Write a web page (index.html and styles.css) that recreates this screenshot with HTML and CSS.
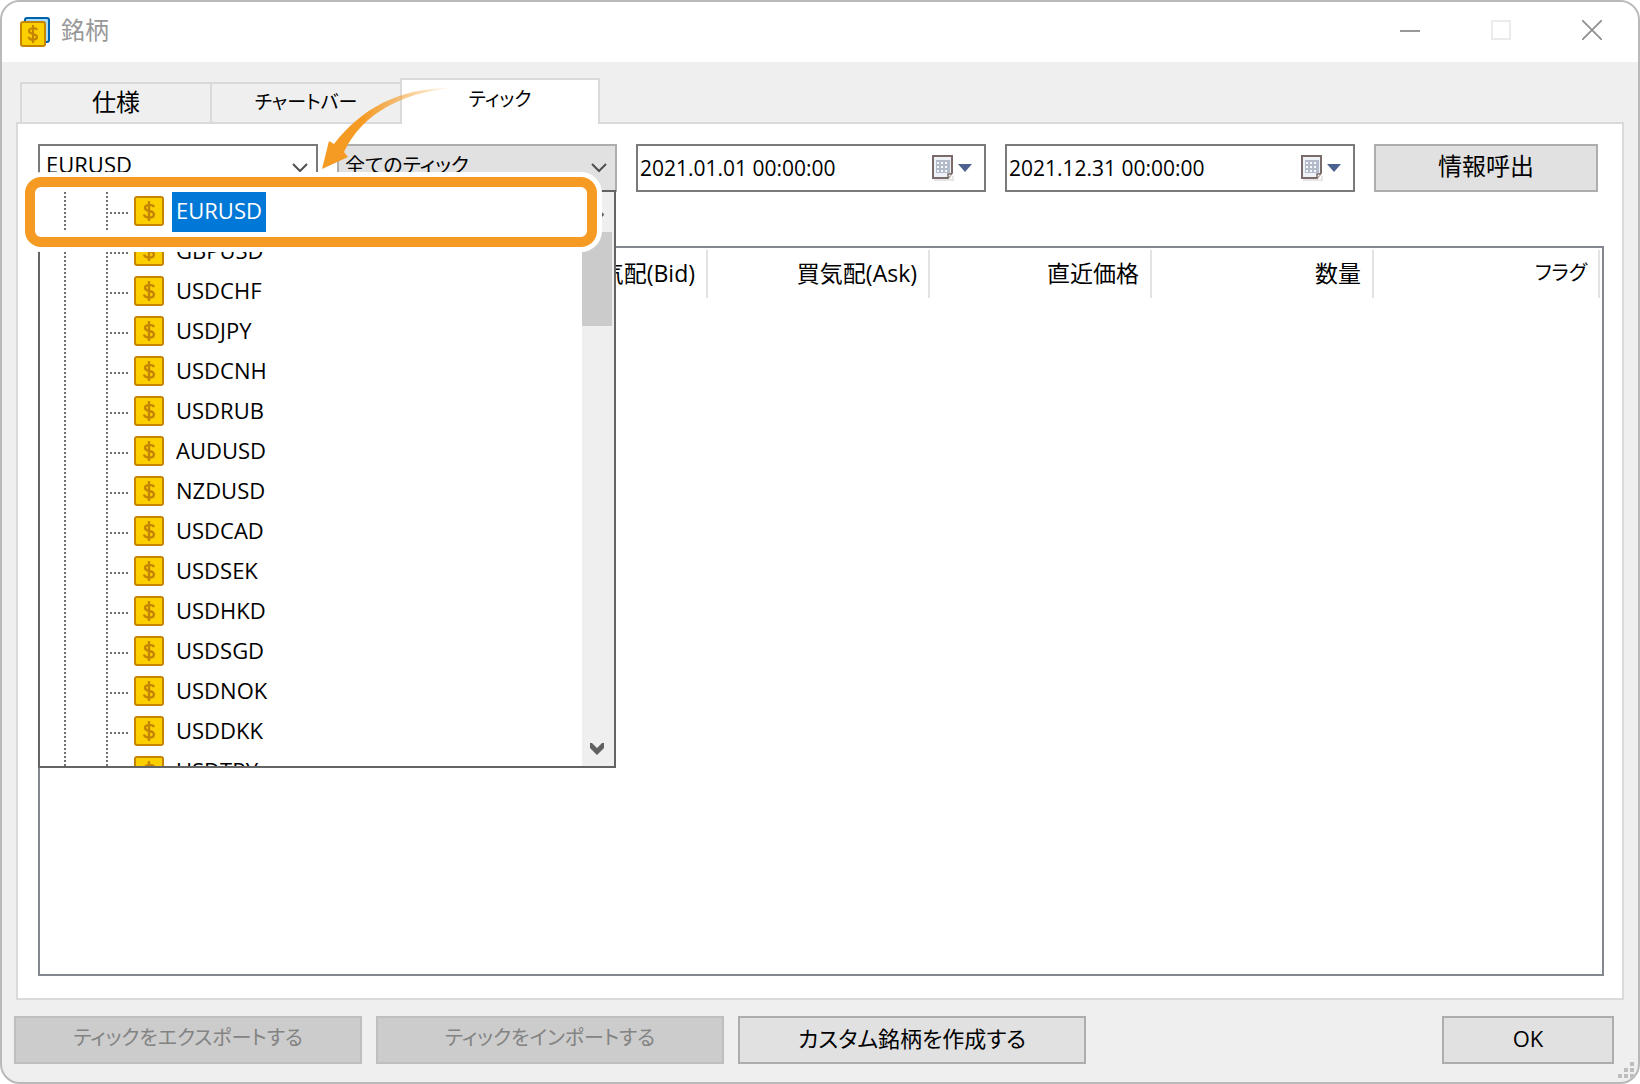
FILE: index.html
```
<!DOCTYPE html>
<html lang="ja">
<head>
<meta charset="utf-8">
<title>銘柄</title>
<link rel="stylesheet" href="styles.css">
</head>
<body>
<svg class="sprite" aria-hidden="true">
  <symbol id="coin" viewBox="0 0 30 30">
    <rect x="1" y="1" width="28" height="28" rx="2" fill="#fccf00" stroke="#c68500" stroke-width="2"/>
    <path d="M15 5v20M20 11c-1-3-9-3-9 1 0 4 9 2 9 6.500 0 4-9 4-10 0" fill="none" stroke="#c68500" stroke-width="2.400"/>
  </symbol>
  <symbol id="chevron" viewBox="0 0 16 10">
    <path d="M1 1l7 7 7-7" fill="none" stroke="#505050" stroke-width="2"/>
  </symbol>
  <symbol id="calendar" viewBox="0 0 42 28">
    <path d="M4 25h18v-3h2v5H4z" fill="#e6e6e6"/>
    <path d="M3 2h19v17l-4 5H3z" fill="#eef1f8" stroke="#7a6b69" stroke-width="2"/>
    <path d="M18 24v-4h4" fill="#fff" stroke="#7a6b69" stroke-width="1.500"/>
    <path d="M6 6h14v13H6z" fill="#b3bbcb"/>
    <path d="M7 8h2v2H7zm4 0h2v2h-2zm4 0h2v2h-2zM7 12h2v2H7zm4 0h2v2h-2zm4 0h2v2h-2zM7 16h2v2H7zm4 0h2v2h-2zm4 0h2v2h-2z" fill="#f6f8fc"/>
    <path d="M28 10h14l-7 8z" fill="#4d618f"/>
  </symbol>
</svg>
<div class="window">
  <header class="titlebar">
    <svg class="app-icon" viewBox="0 0 30 30" aria-hidden="true">
      <rect x="5" y="1" width="24" height="24" rx="2" fill="#a5dcfa" stroke="#0060a8" stroke-width="2"/>
      <rect x="1" y="5" width="24" height="24" rx="2" fill="#fccf00" stroke="#c68500" stroke-width="2"/>
      <path d="M13 8v18M17 13c-1-3-8-2-8 1 0 4 8 2 8 6 0 3-7 4-8.500 0" fill="none" stroke="#c68500" stroke-width="2.200"/>
    </svg>
    <h1 class="title">銘柄</h1>
    <div class="window-controls">
      <button class="win-btn" aria-label="最小化"><svg viewBox="0 0 20 20"><path d="M0 11h20" stroke="#999" stroke-width="2"/></svg></button>
      <button class="win-btn" aria-label="最大化" disabled><svg viewBox="0 0 20 20"><path d="M1 1h18v18H1z" fill="none" stroke="#ebebeb" stroke-width="2"/></svg></button>
      <button class="win-btn" aria-label="閉じる"><svg viewBox="0 0 20 20"><path d="M0 0l20 20M20 0L0 20" stroke="#909090" stroke-width="1.800"/></svg></button>
    </div>
  </header>

  <div class="tabs" role="tablist">
    <button class="tab kanji" role="tab">仕様</button>
    <button class="tab kana" role="tab">チャートバー</button>
    <button class="tab kana active" role="tab" aria-selected="true">ティック</button>
  </div>

  <main class="panel">
    <div class="toolbar">
      <div class="combo">
        <select aria-label="銘柄"><option>EURUSD</option></select>
        <svg class="chevron"><use href="#chevron"/></svg>
      </div>
      <div class="combo filled">
        <select class="kana" aria-label="ティックの種類"><option>全てのティック</option></select>
        <svg class="chevron"><use href="#chevron"/></svg>
      </div>
      <div class="date">
        <input type="text" value="2021.01.01 00:00:00" aria-label="開始日時">
        <button class="date-btn" aria-label="カレンダー"><svg><use href="#calendar"/></svg></button>
      </div>
      <div class="date">
        <input type="text" value="2021.12.31 00:00:00" aria-label="終了日時">
        <button class="date-btn" aria-label="カレンダー"><svg><use href="#calendar"/></svg></button>
      </div>
      <button class="btn kanji">情報呼出</button>

      <div class="dropdown">
        <ul class="tree">
          <li><svg><use href="#coin"/></svg><span>GBPUSD</span></li>
          <li><svg><use href="#coin"/></svg><span>USDCHF</span></li>
          <li><svg><use href="#coin"/></svg><span>USDJPY</span></li>
          <li><svg><use href="#coin"/></svg><span>USDCNH</span></li>
          <li><svg><use href="#coin"/></svg><span>USDRUB</span></li>
          <li><svg><use href="#coin"/></svg><span>AUDUSD</span></li>
          <li><svg><use href="#coin"/></svg><span>NZDUSD</span></li>
          <li><svg><use href="#coin"/></svg><span>USDCAD</span></li>
          <li><svg><use href="#coin"/></svg><span>USDSEK</span></li>
          <li><svg><use href="#coin"/></svg><span>USDHKD</span></li>
          <li><svg><use href="#coin"/></svg><span>USDSGD</span></li>
          <li><svg><use href="#coin"/></svg><span>USDNOK</span></li>
          <li><svg><use href="#coin"/></svg><span>USDDKK</span></li>
          <li><svg><use href="#coin"/></svg><span>USDTRY</span></li>
        </ul>
        <div class="scrollbar">
          <svg class="scroll-arrow" viewBox="0 0 14 12"><path d="M1 8l6-6 6 6" fill="none" stroke="#606060" stroke-width="4"/></svg>
          <div class="thumb"></div>
          <svg class="scroll-arrow" viewBox="0 0 14 12"><path d="M0 0h2l5 5 5-5h2v5l-7 7-7-7z" fill="#606060"/></svg>
        </div>
      </div>
      <div class="callout">
        <ul class="tree">
          <li class="selected"><svg><use href="#coin"/></svg><span>EURUSD</span></li>
        </ul>
      </div>
      <svg class="pointer" viewBox="0 0 140 90" aria-hidden="true">
        <defs>
          <linearGradient id="fade" x1="0" y1="0" x2="1" y2="0">
            <stop offset="0" stop-color="#f59a23"/>
            <stop offset=".3" stop-color="#f59a23"/>
            <stop offset="1" stop-color="#f59a23" stop-opacity="0"/>
          </linearGradient>
        </defs>
        <path d="M2 89L9 61l5 3C42 28 80 7 134 8 82 12 42 34 24 72l4 5z" fill="url(#fade)"/>
      </svg>
    </div>

    <div class="grid">
      <table>
        <colgroup><col><col class="col"><col class="col"><col class="col"><col class="col"><col class="col-last"></colgroup>
        <thead>
          <tr><th>日時</th><th>売気配(Bid)</th><th>買気配(Ask)</th><th>直近価格</th><th>数量</th><th class="kana">フラグ</th></tr>
        </thead>
      </table>
    </div>
  </main>

  <footer class="footer">
    <button class="btn wide kana" disabled>ティックをエクスポートする</button>
    <button class="btn wide kana" disabled>ティックをインポートする</button>
    <button class="btn wide kana mixed">カスタム銘柄を作成する</button>
    <button class="btn ok">OK</button>
    <svg class="grip" viewBox="0 0 16 16" aria-hidden="true"><path d="M12 0h4v4h-4zM6 6h4v4H6zM12 6h4v4h-4zM0 12h4v4H0zM6 12h4v4H6zM12 12h4v4h-4z" fill="#bdbdbd"/></svg>
  </footer>
</div>
</body>
</html>
```
FILE: styles.css
```
* {
  box-sizing: border-box;
}

body {
  margin: 0;
  background: #fff;
  color: #000;
  font: 22px/30px "Open Sans", "Noto Sans CJK JP", sans-serif;
}

button,
select,
input {
  margin: 0;
  padding: 0;
  border: 0;
  border-radius: 0;
  background: none;
  color: inherit;
  font: inherit;
}

.sprite {
  position: absolute;
  width: 0;
  height: 0;
}

.window {
  display: flex;
  flex-direction: column;
  min-height: 100vh;
  border: 2px solid #b9b9b9;
  border-radius: 20px;
  background: #efefef;
  overflow: hidden;
  position: relative;
}

/* Title bar */

.titlebar {
  display: flex;
  align-items: center;
  height: 60px;
  padding: 0 36px 0 18px;
  background: #fff;
}

.app-icon {
  width: 30px;
  height: 30px;
}

.title {
  margin: 0 auto 0 11px;
  padding-bottom: 4px;
  color: #999;
  font-size: 24px;
  font-weight: 400;
}

.window-controls {
  display: flex;
  gap: 71px;
  padding-bottom: 4px;
}

.win-btn {
  width: 20px;
  height: 20px;
}

.win-btn svg {
  display: block;
}

/* Tabs */

.tabs {
  display: flex;
  align-items: flex-end;
  padding: 16px 0 0 18px;
}

.tab {
  width: 192px;
  height: 40px;
  padding-bottom: 2px;
  border: 2px solid #dadada;
  border-bottom: 0;
}

.tab + .tab {
  margin-left: -2px;
}

.tab.active {
  z-index: 1;
  width: 200px;
  height: 46px;
  margin-bottom: -2px;
  padding-bottom: 6px;
  background: #fff;
}

.panel {
  display: flex;
  flex: 1;
  flex-direction: column;
  gap: 54px;
  margin: 0 14px;
  padding: 20px 18px 22px 20px;
  border: 2px solid #dadada;
  background: #fff;
}

/* Toolbar */

.toolbar {
  position: relative;
  display: grid;
  grid-template-columns: 280fr 280fr 350fr 350fr 224fr;
  gap: 19px;
  padding-right: 6px;
}

.combo {
  position: relative;
  height: 48px;
}

.combo select {
  width: 100%;
  height: 100%;
  padding: 0 6px 8px;
  border: 2px solid #7a7a7a;
  background: #fff;
  appearance: none;
}

.combo.filled select {
  padding-bottom: 4px;
  border-color: #adadad;
  background: #e1e1e1;
}

.chevron {
  position: absolute;
  top: 19px;
  right: 10px;
  width: 16px;
  height: 10px;
}

.date {
  display: flex;
  align-items: center;
  height: 48px;
  padding: 0 12px 0 2px;
  border: 2px solid #7a7a7a;
}

.date input {
  flex: 1;
  min-width: 0;
  font-size: 21px;
}

.date-btn,
.date-btn svg {
  display: block;
  width: 42px;
  height: 28px;
}

.btn {
  height: 48px;
  padding-bottom: 4px;
  border: 2px solid #adadad;
  background: #e1e1e1;
}

.btn:disabled {
  border-color: #bfbfbf;
  background: #ccc;
  color: #838383;
}

/* Text sizes by script */

.kana,
.combo .kana {
  font-size: 20px;
  font-feature-settings: "palt";
}

.kana.tab {
  font-size: 19px;
}

.kana.mixed {
  font-size: 22px;
}

.kanji {
  font-size: 24px;
}

/* Symbol list */

.dropdown {
  position: absolute;
  top: 46px;
  left: 0;
  z-index: 2;
  display: flex;
  width: 578px;
  height: 578px;
  border: 2px solid #646464;
  background: #fff;
  overflow: hidden;
}

.tree {
  flex: 1;
  margin: 0;
  padding: 0;
  list-style: none;
}

.dropdown .tree {
  padding: 40px 0 0 24px;
}

.tree li {
  display: flex;
  align-items: center;
  gap: 8px;
  height: 40px;
  padding-left: 70px;
  background:
    repeating-linear-gradient(#707070 0 2px, transparent 2px 4px) 0 0 / 2px 100% no-repeat,
    repeating-linear-gradient(#707070 0 2px, transparent 2px 4px) 42px 0 / 2px 100% no-repeat,
    repeating-linear-gradient(90deg, #707070 0 2px, transparent 2px 4px) 46px 20px / 18px 2px no-repeat;
}

.tree svg {
  width: 30px;
  height: 30px;
  margin-top: -2px;
}

.tree span {
  padding: 3px 4px 7px;
}

.tree .selected span {
  background: #0078d7;
  color: #fff;
}

.scrollbar {
  display: flex;
  flex-direction: column;
  align-items: center;
  width: 32px;
  padding: 16px 2px 11px 0;
  background: #efefef;
}

.scroll-arrow {
  width: 14px;
  height: 12px;
}

.thumb {
  align-self: stretch;
  height: 94px;
  margin: 12px 0 auto;
  background: #cbcbcb;
}

/* Callout around the chosen symbol */

.callout {
  position: absolute;
  top: 33px;
  left: -13px;
  z-index: 3;
  width: 572px;
  height: 70px;
  padding: 5px 0 0 29px;
  border: 10px solid #f59a23;
  border-radius: 16px;
  background: #fff;
  box-shadow: 0 0 0 5px #fff;
}

.pointer {
  position: absolute;
  top: -64px;
  left: 282px;
  z-index: 4;
  width: 140px;
  height: 90px;
}

/* Tick table */

.grid {
  flex: 1;
  padding: 2px;
  border: 2px solid #828790;
}

.grid table {
  width: 100%;
  border-collapse: collapse;
  table-layout: fixed;
}

.col {
  width: 222px;
}

.col-last {
  width: 226px;
}

.grid th {
  height: 48px;
  padding: 0 11px 3px 0;
  border-right: 2px solid #e2e2e2;
  font-weight: 400;
  text-align: right;
}

.grid th:not(.kana) {
  font-size: 23px;
}

/* Footer */

.footer {
  display: flex;
  gap: 14px;
  padding: 16px 24px 18px 12px;
}

.wide {
  width: 348px;
}

.ok {
  width: 172px;
  margin-left: auto;
}

.grip {
  position: absolute;
  right: 4px;
  bottom: 4px;
  width: 16px;
  height: 16px;
}
```
